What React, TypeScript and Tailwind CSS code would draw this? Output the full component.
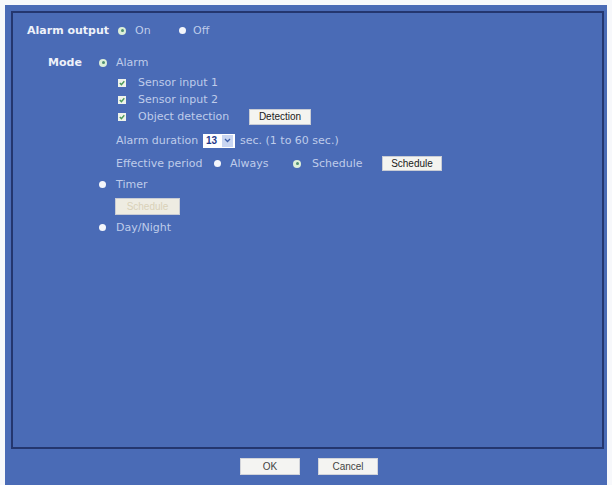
import React from 'react';

const LABEL = "font-['DejaVu_Sans',sans-serif] text-[11px] leading-[17px] text-[#bfcbea] whitespace-nowrap";
const BOLD = "font-['DejaVu_Sans',sans-serif] text-[11px] leading-[17px] font-bold text-[#eef1f9] whitespace-nowrap";

const Radio = ({ checked }: { checked?: boolean }) => (
  <span className="w-[8px] h-[17px] flex items-center justify-center shrink-0">
    {checked ? (
      <span className="w-[8px] h-[8px] rounded-full bg-[#dcefd8] flex items-center justify-center">
        <span className="w-[3px] h-[3px] rounded-full bg-[#4f8f72]" />
      </span>
    ) : (
      <span className="w-[7px] h-[7px] rounded-full bg-[#f4f6fb]" />
    )}
  </span>
);

const Check = () => (
  <span className="w-[8px] h-[17px] flex items-center shrink-0">
    <span className="w-[8px] h-[8px] bg-[#eef3ea] flex items-center justify-center">
      <svg width="6" height="6" viewBox="0 0 6 6">
        <path d="M0.8 3 L2.4 4.6 L5.3 1.2" stroke="#4c9a5c" strokeWidth="1.4" fill="none" />
      </svg>
    </span>
  </span>
);

const Btn = ({ label, w, h = 'h-[16px]', disabled }: { label: string; w: string; h?: string; disabled?: boolean }) => (
  <span
    className={`${w} ${h} flex items-center justify-center border border-[#c9ccd4] font-['Liberation_Sans',sans-serif] text-[10px] ${
      disabled ? 'bg-[#eeece2] text-[#d9d1b8]' : 'bg-[#f4f4f0] text-[#1a1a1a]'
    }`}
  >
    {label}
  </span>
);

const CheckRow = ({ label, children }: { label: string; children?: React.ReactNode }) => (
  <div className="flex items-center h-[17px] ml-[105px]">
    <Check />
    <span className={`${LABEL} ml-[12px] w-[111px]`}>{label}</span>
    {children}
  </div>
);

export default function App() {
  return (
    <div className="w-[612px] h-[485px] bg-[#f7f8fb] pl-[5px] pr-[5px] pt-[5px]">
      <div className="h-full bg-[#4a6bb6] pl-[6px] pr-[3px] pt-[6px] flex flex-col">
        <div className="h-[438px] border-2 border-[#24366f] pt-[9px]">
          {/* Alarm output */}
          <div className="flex items-center h-[17px] ml-[14px]">
            <span className={`${BOLD} w-[91px]`}>Alarm output</span>
            <Radio checked />
            <span className={`${LABEL} ml-[9px] w-[43px]`}>On</span>
            <Radio />
            <span className={`${LABEL} ml-[7px]`}>Off</span>
          </div>

          {/* Mode */}
          <div className="flex items-center h-[17px] ml-[35px] mt-[15px]">
            <span className={`${BOLD} w-[51px]`}>Mode</span>
            <Radio checked />
            <span className={`${LABEL} ml-[9px]`}>Alarm</span>
          </div>

          <div className="mt-[3px]">
            <CheckRow label="Sensor input 1" />
            <CheckRow label="Sensor input 2" />
            <CheckRow label="Object detection">
              <Btn label="Detection" w="w-[62px]" />
            </CheckRow>
          </div>

          {/* Alarm duration */}
          <div className="flex items-center h-[17px] ml-[103px] mt-[7px]">
            <span className={`${LABEL} w-[87px]`}>Alarm duration</span>
            <span className="w-[32px] h-[14px] bg-white flex items-center">
              <span className="font-['Liberation_Sans',sans-serif] text-[10px] font-bold text-[#1f3a8a] pl-[3px] w-[19px]">13</span>
              <span className="w-[11px] h-[12px] bg-[#c9d6f2] flex items-center justify-center">
                <svg width="7" height="5" viewBox="0 0 7 5">
                  <path d="M1 1 L3.5 3.5 L6 1" stroke="#3f5fa8" strokeWidth="1.3" fill="none" />
                </svg>
              </span>
            </span>
            <span className={`${LABEL} ml-[5px]`}>sec. (1 to 60 sec.)</span>
          </div>

          {/* Effective period */}
          <div className="flex items-center h-[17px] ml-[103px] mt-[6px]">
            <span className={`${LABEL} w-[97px]`}>Effective period</span>
            <Radio />
            <span className={`${LABEL} ml-[9px] w-[63px]`}>Always</span>
            <Radio checked />
            <span className={`${LABEL} ml-[11px] w-[70px]`}>Schedule</span>
            <Btn label="Schedule" w="w-[60px]" h="h-[15px]" />
          </div>

          {/* Timer */}
          <div className="flex items-center h-[17px] ml-[85px] mt-[4px]">
            <Radio />
            <span className={`${LABEL} ml-[10px]`}>Timer</span>
          </div>
          <div className="flex items-center h-[17px] ml-[102px] mt-[5px]">
            <Btn label="Schedule" w="w-[65px]" h="h-[17px]" disabled />
          </div>

          {/* Day/Night */}
          <div className="flex items-center h-[17px] ml-[85px] mt-[4px]">
            <Radio />
            <span className={`${LABEL} ml-[10px]`}>Day/Night</span>
          </div>
        </div>

        <div className="flex mt-[9px] ml-[229px] gap-[18px]">
          <span className="w-[60px] h-[17px] flex items-center justify-center bg-[#f4f4f2] border border-[#d2d4da] font-['Liberation_Sans',sans-serif] text-[10px] text-[#444]">OK</span>
          <span className="w-[60px] h-[17px] flex items-center justify-center bg-[#f4f4f2] border border-[#d2d4da] font-['Liberation_Sans',sans-serif] text-[10px] text-[#444]">Cancel</span>
        </div>
      </div>
    </div>
  );
}
